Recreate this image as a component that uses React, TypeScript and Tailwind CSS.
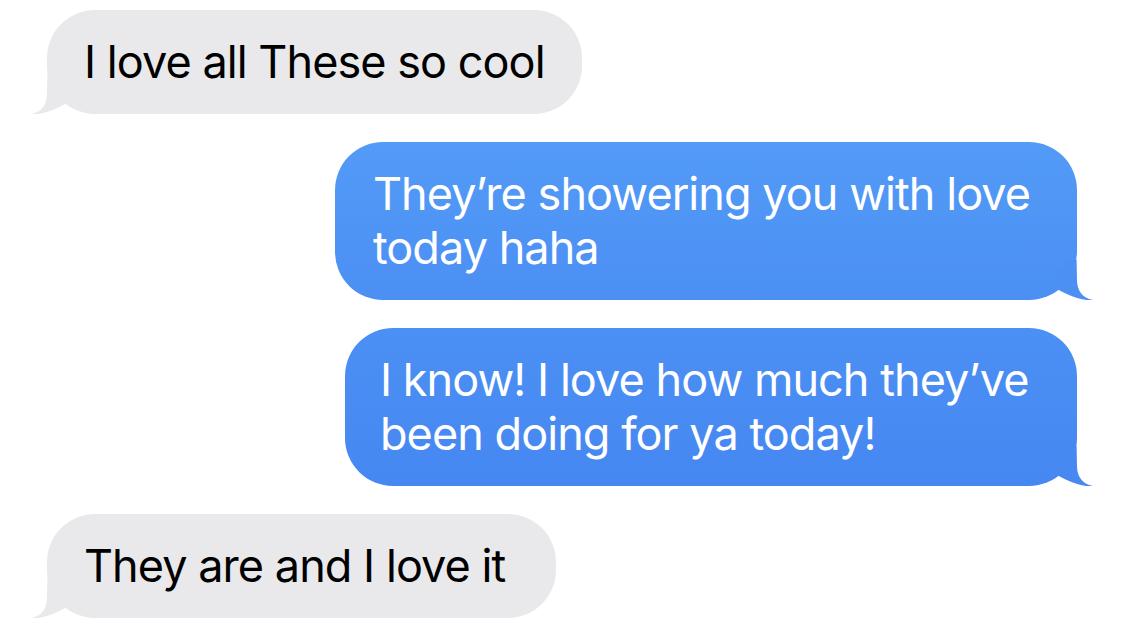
import type { ReactNode } from 'react'

type Side = 'left' | 'right'

function Tail({ side, color }: { side: Side, color: string }) {
  // drawn for the right side; mirrored for the left
  return (
    <svg
      className={side === 'right' ? 'absolute -right-[16px] bottom-0' : 'absolute -left-[16px] bottom-0 -scale-x-100'}
      width="50"
      height="40"
      viewBox="0 0 50 40"
    >
      <path
        d="M26 0 L33.6 0 L34 20 C34 30 39 38 50 40 C40 41 28 37 14 29 Q14 12 26 0 Z"
        fill={color}
      />
    </svg>
  )
}

function Bubble({ side, className, tailColor, children }: { side: Side, className: string, tailColor: string, children: ReactNode }) {
  return (
    <div className={`relative rounded-[48px] pt-[25px] pb-[25px] text-[45px] leading-[54px] tracking-[-0.021em] ${side === 'right' ? 'self-end text-white' : 'self-start text-black'} ${className}`}>
      <Tail side={side} color={tailColor} />
      <div className="relative whitespace-nowrap">{children}</div>
    </div>
  )
}

export default function App() {
  return (
    <div
      className="min-h-screen bg-white pl-[47px] pr-[48px] pt-[10px] flex flex-col gap-[28px]"
      style={{ fontFamily: 'Inter, "Noto Sans", sans-serif' }}
    >
      <Bubble side="left" tailColor="#e9e9eb" className="w-[535px] pl-[37px] bg-[#e9e9eb]">
        I love all These so cool
      </Bubble>
      <Bubble side="right" tailColor="#4c90f3" className="w-[742px] pl-[38px] bg-linear-to-b from-[#539bf7] to-[#4b8ff3]">
        They’re showering you with love
        <br />
        today haha
      </Bubble>
      <Bubble side="right" tailColor="#4788f1" className="w-[732px] pl-[35px] bg-linear-to-b from-[#4b90f4] to-[#4687f1]">
        I know! I love how much they’ve
        <br />
        been doing for ya today!
      </Bubble>
      <Bubble side="left" tailColor="#e9e9eb" className="w-[509px] pl-[37px] bg-[#e9e9eb]">
        They are and I love it
      </Bubble>
    </div>
  )
}
